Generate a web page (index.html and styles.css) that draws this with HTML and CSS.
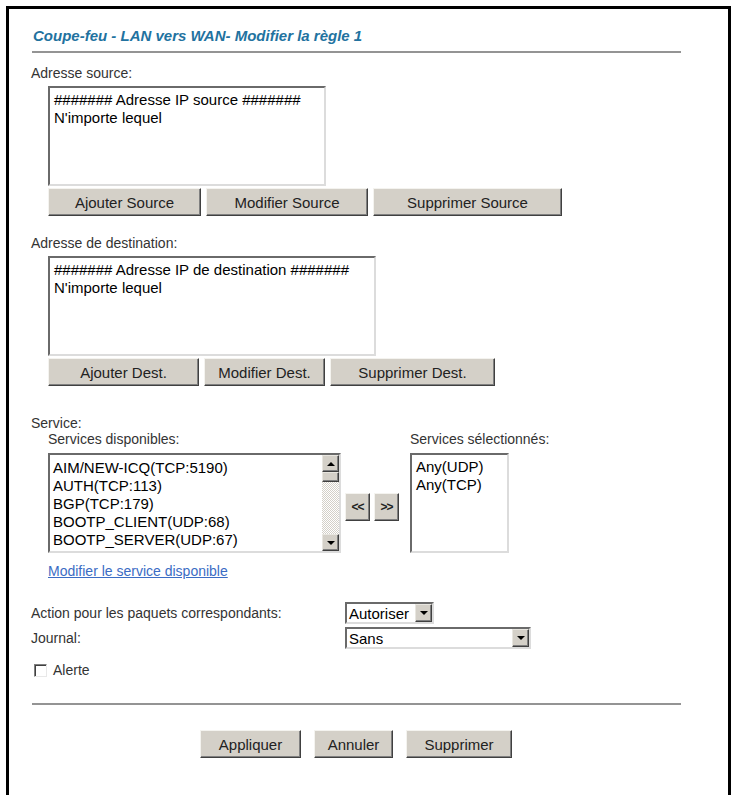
FILE: index.html
```html
<!DOCTYPE html>
<html lang="fr">
<head>
  <meta charset="UTF-8">
  <title>Coupe-feu - Modifier la règle</title>
  <link rel="stylesheet" href="styles.css">
</head>
<body>
  <div class="frame">
    <div class="page">
      <h1 class="title">Coupe-feu - LAN vers WAN- Modifier la règle 1</h1>
      <hr class="rule">

      <!-- Adresse source -->
      <div class="section section-src">
        <div class="label">Adresse source:</div>
        <div class="indent">
          <div class="listbox list-src">
            <div>####### Adresse IP source #######</div>
            <div>N'importe lequel</div>
          </div>
          <div class="btn-row">
            <button class="btn btn-add-src">Ajouter Source</button>
            <button class="btn btn-edit-src">Modifier Source</button>
            <button class="btn btn-del-src">Supprimer Source</button>
          </div>
        </div>
      </div>

      <!-- Adresse de destination -->
      <div class="section section-dst">
        <div class="label">Adresse de destination:</div>
        <div class="indent">
          <div class="listbox list-dst">
            <div>####### Adresse IP de destination #######</div>
            <div>N'importe lequel</div>
          </div>
          <div class="btn-row">
            <button class="btn btn-add-dst">Ajouter Dest.</button>
            <button class="btn btn-edit-dst">Modifier Dest.</button>
            <button class="btn btn-del-dst">Supprimer Dest.</button>
          </div>
        </div>
      </div>

      <!-- Services -->
      <div class="section section-svc">
        <div class="label">Service:</div>
        <div class="services">
          <div class="col-avail">
            <div class="label">Services disponibles:</div>
            <div class="listbox list-avail">
              <div class="list-items">
                <div>AIM/NEW-ICQ(TCP:5190)</div>
                <div>AUTH(TCP:113)</div>
                <div>BGP(TCP:179)</div>
                <div>BOOTP_CLIENT(UDP:68)</div>
                <div>BOOTP_SERVER(UDP:67)</div>
              </div>
              <div class="scrollbar">
                <span class="scroll-btn"><span class="tri-up"></span></span>
                <span class="scroll-thumb"></span>
                <span class="scroll-track"></span>
                <span class="scroll-btn"><span class="tri-down"></span></span>
              </div>
            </div>
            <a href="#" class="link">Modifier le service disponible</a>
          </div>
          <div class="arrows">
            <button class="btn btn-arrow">&lt;&lt;</button>
            <button class="btn btn-arrow">&gt;&gt;</button>
          </div>
          <div class="col-sel">
            <div class="label">Services sélectionnés:</div>
            <div class="listbox list-sel">
              <div>Any(UDP)</div>
              <div>Any(TCP)</div>
            </div>
          </div>
        </div>
      </div>

      <!-- Action / Journal -->
      <div class="form-row row-action">
        <div class="form-label label">Action pour les paquets correspondants:</div>
        <div class="dropdown dd-action">
          <span class="dropdown-text">Autoriser</span>
          <span class="dropdown-btn"><span class="tri-down"></span></span>
        </div>
      </div>
      <div class="form-row row-log">
        <div class="form-label label">Journal:</div>
        <div class="dropdown dd-log">
          <span class="dropdown-text">Sans</span>
          <span class="dropdown-btn"><span class="tri-down"></span></span>
        </div>
      </div>
      <div class="form-row row-alert">
        <span class="checkbox"></span>
        <span class="label">Alerte</span>
      </div>

      <hr class="rule rule-bottom">

      <div class="actions">
        <button class="btn btn-apply">Appliquer</button>
        <button class="btn btn-cancel">Annuler</button>
        <button class="btn btn-delete">Supprimer</button>
      </div>
    </div>
  </div>
</body>
</html>
```

FILE: styles.css
```css
body {
  margin: 0;
  font-family: "Liberation Sans", Arial, sans-serif;
  color: #333;
  background-color: #fff;
}
.frame {
  box-sizing: border-box;
  margin: 6px 3px 0 6px;
  height: 789px;
  border: 3px solid #000;
  border-bottom: none;
  padding: 18px 0 0 22px;
}
.page {
  width: 650px;
}
.title {
  margin: 0 0 0 2px;
  font-size: 15px;
  line-height: 18px;
  font-weight: bold;
  font-style: italic;
  color: #22729f;
}
.rule {
  margin: 6px 0 0 1px;
  height: 2px;
  border: none;
  background-color: #949494;
}
.label {
  font-size: 14px;
  line-height: 16px;
  color: #333;
}
.indent {
  padding-left: 17px;
}
.section-src {
  margin-top: 12px;
}
.section-dst {
  margin-top: 19px;
}
.section-svc {
  margin-top: 29px;
}

/* sunken list boxes */
.listbox {
  box-sizing: border-box;
  height: 100px;
  margin-top: 5px;
  padding: 3px 4px;
  border: 2px solid;
  border-color: #6a6a6a #dcdcdc #dcdcdc #6a6a6a;
  background-color: #fff;
  font-size: 15px;
  line-height: 18px;
  color: #000;
  white-space: nowrap;
}
.list-src {
  width: 278px;
}
.list-dst {
  width: 328px;
}
.list-avail {
  display: flex;
  width: 293px;
  margin-top: 6px;
  padding: 0;
}
.list-items {
  flex: 1;
  padding: 4px 3px;
  overflow: hidden;
}
.list-sel {
  width: 99px;
  margin-top: 6px;
}

/* scrollbar of the services list */
.scrollbar {
  display: flex;
  flex-direction: column;
  width: 17px;
}
.scroll-btn,
.scroll-thumb {
  box-sizing: border-box;
  display: flex;
  align-items: center;
  justify-content: center;
  height: 17px;
  background-color: #d4d0c8;
  border: 1px solid;
  border-color: #e8e6e0 #404040 #404040 #e8e6e0;
  box-shadow: inset -1px -1px #808080;
}
.scroll-thumb {
  height: 10px;
}
.scroll-track {
  flex: 1;
  background: repeating-conic-gradient(#fff 0 25%, #d4d0c8 0 50%) 0 0 / 2px 2px;
}
.tri-up {
  width: 0;
  height: 0;
  border-left: 4px solid transparent;
  border-right: 4px solid transparent;
  border-bottom: 4px solid #000;
}
.tri-down {
  width: 0;
  height: 0;
  border-left: 4px solid transparent;
  border-right: 4px solid transparent;
  border-top: 4px solid #000;
}

/* buttons */
.btn {
  box-sizing: border-box;
  height: 28px;
  padding: 0;
  font-family: "Liberation Sans", Arial, sans-serif;
  font-size: 15px;
  color: #222;
  background-color: #d4d0c8;
  border: 1px solid;
  border-color: #f4f3ef #404040 #404040 #f4f3ef;
  box-shadow: inset -1px -1px #808080;
  border-radius: 0;
}
.btn-row {
  display: flex;
  gap: 5px;
  margin-top: 2px;
}
.btn-add-src { width: 153px; }
.btn-edit-src { width: 162px; }
.btn-del-src { width: 189px; }
.btn-add-dst { width: 151px; }
.btn-edit-dst { width: 121px; }
.btn-del-dst { width: 165px; }
.btn-apply { width: 101px; }
.btn-cancel { width: 79px; }
.btn-delete { width: 106px; }

.services {
  display: flex;
  padding-left: 17px;
}
.col-avail {
  width: 293px;
}
.arrows {
  display: flex;
  gap: 4px;
  margin: 62px 0 0 4px;
}
.btn-arrow {
  width: 25px;
  font-size: 12px;
  font-weight: bold;
  letter-spacing: -1px;
}
.col-sel {
  margin-left: 11px;
}
.link {
  display: block;
  margin-top: 10px;
  font-size: 14px;
  line-height: 16px;
  color: #3b6cc4;
}

/* action / journal rows */
.form-row {
  display: flex;
  align-items: center;
}
.form-label {
  width: 314px;
}
.row-action {
  margin-top: 23px;
}
.row-log {
  margin-top: 3px;
}
.row-alert {
  margin-top: 13px;
  gap: 6px;
}
.dropdown {
  box-sizing: border-box;
  display: flex;
  align-items: center;
  height: 22px;
  border: 2px solid;
  border-color: #6a6a6a #dcdcdc #dcdcdc #6a6a6a;
  background-color: #fff;
}
.dd-action {
  width: 89px;
}
.dd-log {
  width: 186px;
}
.dropdown-text {
  flex: 1;
  padding-left: 2px;
  font-size: 15px;
  color: #000;
}
.dropdown-btn {
  box-sizing: border-box;
  display: flex;
  align-items: center;
  justify-content: center;
  width: 17px;
  height: 18px;
  background-color: #d4d0c8;
  border: 1px solid;
  border-color: #e8e6e0 #404040 #404040 #e8e6e0;
  box-shadow: inset -1px -1px #808080;
}
.checkbox {
  box-sizing: border-box;
  width: 13px;
  height: 13px;
  margin-left: 3px;
  border: 1px solid;
  border-color: #808080 #e8e8e8 #e8e8e8 #808080;
  box-shadow: inset 1px 1px #404040;
  background-color: #fff;
}
.rule-bottom {
  margin-top: 25px;
}
.actions {
  display: flex;
  justify-content: center;
  gap: 13px;
  margin-top: 25px;
}
```
